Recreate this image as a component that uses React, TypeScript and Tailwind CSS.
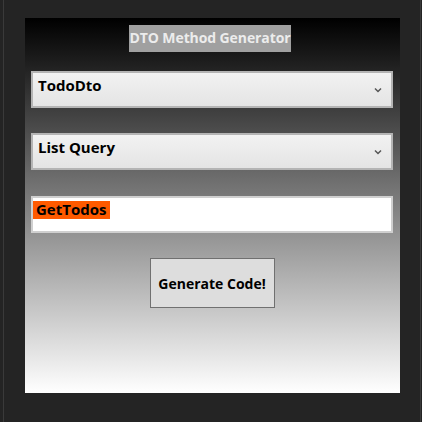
import React from "react";

const font = { fontFamily: '"Open Sans", "Noto Sans", sans-serif' };

function Chevron() {
  return (
    <svg width="8" height="6" viewBox="0 0 8 6" className="absolute right-[9px] top-[14px]">
      <path d="M1 1.5 L4 4.5 L7 1.5" stroke="#555" strokeWidth="1.5" fill="none" />
    </svg>
  );
}

function Select({ label }: { label: string }) {
  return (
    <div className="relative h-[37px] border-2 border-[#b4b4b4] bg-[linear-gradient(to_bottom,#f2f2f2,#e4e4e4)] pl-[5px] pt-0">
      <span className="text-[15px] leading-[20px] font-bold text-black">{label}</span>
      <Chevron />
    </div>
  );
}

export default function App() {
  return (
    <div className="w-[422px] h-[422px] bg-[#242424] relative" style={font}>
      <div className="absolute left-[3px] top-0 w-px h-full bg-[#3a3a3a]" />
      <div className="absolute left-[420px] top-0 w-px h-full bg-[#3a3a3a]" />
      <div className="pt-[18px] pl-[25px]">
        <div className="w-[375px] h-[375px] bg-[linear-gradient(to_bottom,#000000,#ffffff)] pl-[6px] pr-[7px] pt-[7px] flex flex-col">
          <div className="flex justify-center">
            <div className="h-[27px] bg-[#a0a0a0] text-[#ececec] font-bold text-[14px] leading-[26px] px-[1px] tracking-[-0.1px] translate-x-[-2px]">
              DTO Method Generator
            </div>
          </div>
          <div className="mt-[19px]">
            <Select label="TodoDto" />
          </div>
          <div className="mt-[25px]">
            <Select label="List Query" />
          </div>
          <div className="mt-[26px] h-[37px] border-2 border-[#cfcfcf] bg-white pt-[3px]">
            <div className="bg-[#ff5a00] h-[18px] w-[77px] pl-[3px] text-[15px] leading-[16px] font-bold text-black">
              GetTodos
            </div>
          </div>
          <div className="mt-[25px] flex justify-center">
            <button className="w-[125px] h-[50px] bg-[#dddddd] border border-[#707070] text-[14px] font-bold text-black">
              Generate Code!
            </button>
          </div>
        </div>
      </div>
    </div>
  );
}
